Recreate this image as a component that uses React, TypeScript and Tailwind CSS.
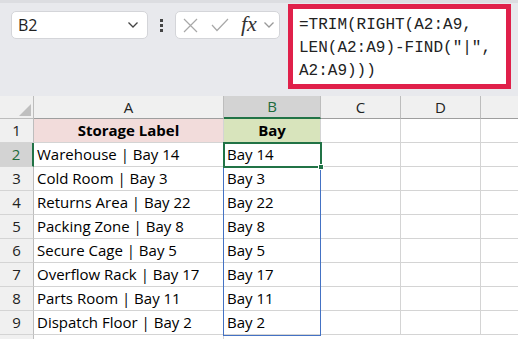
import React from "react";

const rows = [
  ["Warehouse | Bay 14", "Bay 14"],
  ["Cold Room | Bay 3", "Bay 3"],
  ["Returns Area | Bay 22", "Bay 22"],
  ["Packing Zone | Bay 8", "Bay 8"],
  ["Secure Cage | Bay 5", "Bay 5"],
  ["Overflow Rack | Bay 17", "Bay 17"],
  ["Parts Room | Bay 11", "Bay 11"],
  ["Dispatch Floor | Bay 2", "Bay 2"],
];

const sans = { fontFamily: "'Open Sans', 'Liberation Sans', sans-serif" };

function Chevron({ className }: { className?: string }) {
  return (
    <svg width="12" height="8" viewBox="0 0 12 8" className={className}>
      <path d="M1.5 1.5 L6 6 L10.5 1.5" fill="none" stroke="currentColor" strokeWidth="1.3" />
    </svg>
  );
}

function TopBar() {
  return (
    <div className="relative h-[96px] bg-[#e8e9ed] border-t-[3px] border-[#dcdde1]">
      <div className="flex items-start pt-[8px] pl-[11px]">
        <div className="w-[137px] h-[28px] bg-white border border-[#d4d5d9] rounded-[5px] flex items-center justify-between pl-[6px] pr-[8px]">
          <span className="text-[16px] text-[#222]" style={sans}>B2</span>
          <Chevron className="text-[#444]" />
        </div>
        <div className="w-[27px] h-[28px] flex flex-col items-center justify-center gap-[2px]">
          <div className="w-[3px] h-[3px] bg-[#444]" />
          <div className="w-[3px] h-[3px] bg-[#444]" />
          <div className="w-[3px] h-[3px] bg-[#444]" />
        </div>
        <div className="w-[105px] h-[28px] bg-white border border-[#d4d5d9] rounded-[5px] flex items-center pl-[7px]">
          <svg width="15" height="15" viewBox="0 0 15 15">
            <path d="M1 1 L14 14 M14 1 L1 14" stroke="#a8a8a8" strokeWidth="1.2" fill="none" />
          </svg>
          <svg width="18" height="14" viewBox="0 0 18 14" className="ml-[13px]">
            <path d="M1 7 L6 12.5 L17 1" stroke="#a8a8a8" strokeWidth="1.2" fill="none" />
          </svg>
          <span className="ml-[12px] italic text-[22px] leading-none text-[#333] -mt-[2px]" style={{ fontFamily: "'Liberation Serif', serif" }}>fx</span>
          <Chevron className="ml-[6px] text-[#999]" />
        </div>
      </div>
      <div className="absolute left-[288px] top-[1px] w-[223px] h-[85px] border-[5px] border-[#e0204a] bg-white pl-[6px] pt-[5px]">
        <div className="text-[16px] leading-[23px] text-[#222] whitespace-pre" style={{ fontFamily: "'Liberation Mono', monospace" }}>
          {'=TRIM(RIGHT(A2:A9,\nLEN(A2:A9)-FIND("|",\nA2:A9)))'}
        </div>
      </div>
    </div>
  );
}

function HeaderRow() {
  const cols = [
    { l: "A", w: "w-[190px]", sel: false },
    { l: "B", w: "w-[97px]", sel: true },
    { l: "C", w: "w-[80px]", sel: false },
    { l: "D", w: "w-[80px]", sel: false },
  ];
  return (
    <div className="flex h-[23px] bg-[#f0f0f0]" style={sans}>
      <div className="w-[34px] shrink-0 relative border-r border-b border-[#bdbdbd]">
        <svg width="12" height="12" className="absolute right-[2px] bottom-[2px]">
          <path d="M12 0 L12 12 L0 12 Z" fill="#bfbfbf" />
        </svg>
      </div>
      {cols.map((c) =>
        c.sel ? (
          <div key={c.l} className={`${c.w} shrink-0 bg-[#d3d3d3] border-r border-[#bdbdbd] border-b-2 border-b-[#217346] flex items-center justify-center text-[15px] text-[#1e6b3c]`}>
            {c.l}
          </div>
        ) : (
          <div key={c.l} className={`${c.w} shrink-0 border-r border-[#bdbdbd] border-b border-b-[#9e9e9e] flex items-center justify-center text-[15px] text-[#222]`}>
            {c.l}
          </div>
        )
      )}
      <div className="flex-1 border-b border-[#9e9e9e] flex items-center justify-end overflow-hidden">
        <span className="text-[15px] text-[#c07020] -mr-[8px]">E</span>
      </div>
    </div>
  );
}

function DataRow({ n, a, b, first, sel }: { n: number; a: string; b: string; first?: boolean; sel?: boolean }) {
  return (
    <div className="flex h-[24px] text-[15px]" style={sans}>
      <div
        className={`w-[34px] shrink-0 flex items-center justify-center border-b border-[#d4d4d4] ${
          sel ? "bg-[#d3d3d3] text-[#1e6b3c] border-r-2 border-r-[#217346]" : "bg-[#f0f0f0] text-[#222] border-r border-r-[#bdbdbd]"
        }`}
      >
        {n}
      </div>
      <div
        className={`w-[190px] shrink-0 flex items-center border-r border-b border-[#d4d4d4] text-black ${
          first ? "justify-center font-bold bg-[#f2dcdb]" : "pl-[3px]"
        }`}
      >
        {a}
      </div>
      <div
        className={`w-[97px] shrink-0 flex items-center border-r border-b border-[#d4d4d4] text-black ${
          first ? "justify-center font-bold bg-[#d8e4bc]" : "pl-[3px]"
        }`}
      >
        {b}
      </div>
      <div className="w-[80px] shrink-0 border-r border-b border-[#d4d4d4]" />
      <div className="w-[80px] shrink-0 border-r border-b border-[#d4d4d4]" />
      <div className="flex-1 border-b border-[#d4d4d4]" />
    </div>
  );
}

export default function App() {
  return (
    <div className="w-[518px] h-[339px] overflow-hidden bg-white">
      <TopBar />
      <div className="relative">
        <HeaderRow />
        <DataRow n={1} a="Storage Label" b="Bay" first />
        {rows.map(([a, b], i) => (
          <DataRow key={i} n={i + 2} a={a} b={b} sel={i === 0} />
        ))}
        <div className="flex h-[24px]">
          <div className="w-[34px] bg-[#f0f0f0] border-r border-[#bdbdbd]" />
          <div className="w-[190px] border-r border-[#d4d4d4]" />
        </div>
        {/* spill range B2:B9 */}
        <div className="absolute left-[223px] top-[47px] w-[98px] h-[193px] border border-[#4472c4] pointer-events-none" />
        {/* active cell B2 */}
        <div className="absolute left-[223px] top-[46px] w-[99px] h-[26px] border-2 border-[#217346] pointer-events-none">
          <div className="absolute -right-[4px] -bottom-[4px] w-[6px] h-[6px] bg-[#217346] border border-white" />
        </div>
      </div>
    </div>
  );
}
